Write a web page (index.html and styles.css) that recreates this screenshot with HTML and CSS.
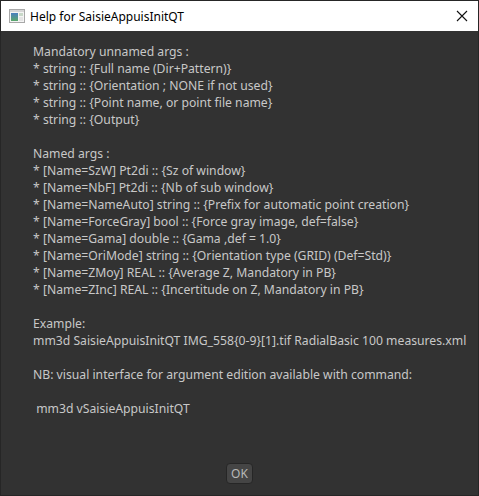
FILE: index.html
```html
<!DOCTYPE html>
<html>
<head>
<meta charset="utf-8">
<link rel="stylesheet" href="styles.css">
</head>
<body>
<div class="window">
  <div class="titlebar">
    <svg class="appicon" width="16" height="14" viewBox="0 0 16 14">
      <rect x="0.5" y="0.5" width="15" height="13" fill="#f4f4f4" stroke="#a8a8a8"/>
      <rect x="1" y="1" width="14" height="2" fill="#d6d6d6"/>
      <defs>
        <linearGradient id="g" x1="0" y1="0" x2="0" y2="1">
          <stop offset="0" stop-color="#4a7fc0"/>
          <stop offset="1" stop-color="#5aa86a"/>
        </linearGradient>
      </defs>
      <rect x="2" y="4" width="7" height="8" fill="url(#g)"/>
      <rect x="10" y="4" width="4" height="3" fill="#c8d8c8"/>
      <rect x="10" y="8" width="4" height="4" fill="#e4e4e4"/>
    </svg>
    <span class="title">Help for SaisieAppuisInitQT</span>
    <svg class="close" width="12" height="12" viewBox="0 0 12 12">
      <path d="M1 1L11 11M11 1L1 11" stroke="#111" stroke-width="1.1"/>
    </svg>
  </div>
  <div class="content">
    <div class="text">
      <div class="line">Mandatory unnamed args :</div>
      <div class="line">* string :: {Full name (Dir+Pattern)}</div>
      <div class="line">* string :: {Orientation ; NONE if not used}</div>
      <div class="line">* string :: {Point name, or point file name}</div>
      <div class="line">* string :: {Output}</div>
      <div class="line"> </div>
      <div class="line">Named args :</div>
      <div class="line">* [Name=SzW] Pt2di :: {Sz of window}</div>
      <div class="line">* [Name=NbF] Pt2di :: {Nb of sub window}</div>
      <div class="line">* [Name=NameAuto] string :: {Prefix for automatic point creation}</div>
      <div class="line">* [Name=ForceGray] bool :: {Force gray image, def=false}</div>
      <div class="line">* [Name=Gama] double :: {Gama ,def = 1.0}</div>
      <div class="line">* [Name=OriMode] string :: {Orientation type (GRID) (Def=Std)}</div>
      <div class="line">* [Name=ZMoy] REAL :: {Average Z, Mandatory in PB}</div>
      <div class="line">* [Name=ZInc] REAL :: {Incertitude on Z, Mandatory in PB}</div>
      <div class="line"> </div>
      <div class="line">Example:</div>
      <div class="line">mm3d SaisieAppuisInitQT IMG_558{0-9}[1].tif RadialBasic 100 measures.xml</div>
      <div class="line"> </div>
      <div class="line">NB: visual interface for argument edition available with command:</div>
      <div class="line"> </div>
      <div class="line"> mm3d vSaisieAppuisInitQT</div>
    </div>
    <div class="buttons">
      <button class="ok">OK</button>
    </div>
  </div>
</div>
</body>
</html>
```

FILE: styles.css
```css
html, body {
  margin: 0;
  padding: 0;
  background: #323232;
}
.window {
  width: 479px;
  height: 496px;
  box-sizing: border-box;
  border: 1px solid #262626;
  display: flex;
  flex-direction: column;
  background: #323232;
}
.titlebar {
  height: 30px;
  flex: none;
  background: #ffffff;
  display: flex;
  align-items: center;
  padding-left: 8px;
  padding-right: 10px;
  font-family: "Noto Sans", "Open Sans", sans-serif;
  font-size: 12px;
  color: #000;
}
.appicon {
  flex: none;
  margin-top: -1px;
}
.title {
  margin-left: 5px;
  flex: 1;
}
.close {
  flex: none;
}
.content {
  flex: 1;
  display: flex;
  flex-direction: column;
  padding: 12px 0 0 32px;
}
.text {
  font-family: "Noto Sans", "Open Sans", sans-serif;
  font-size: 12.2px;
  line-height: 17px;
  color: #c8c8c8;
  flex: 1;
}
.line {
  white-space: pre;
  height: 17px;
}
.buttons {
  display: flex;
  justify-content: center;
  padding-right: 32px;
  padding-bottom: 11px;
}
.ok {
  width: 27px;
  height: 21px;
  box-sizing: border-box;
  padding: 0;
  border: 1px solid #262626;
  border-radius: 4px;
  background: #454545;
  color: #b8b8b8;
  font-family: "Noto Sans", "Open Sans", sans-serif;
  font-size: 12px;
  line-height: 19px;
}
```
